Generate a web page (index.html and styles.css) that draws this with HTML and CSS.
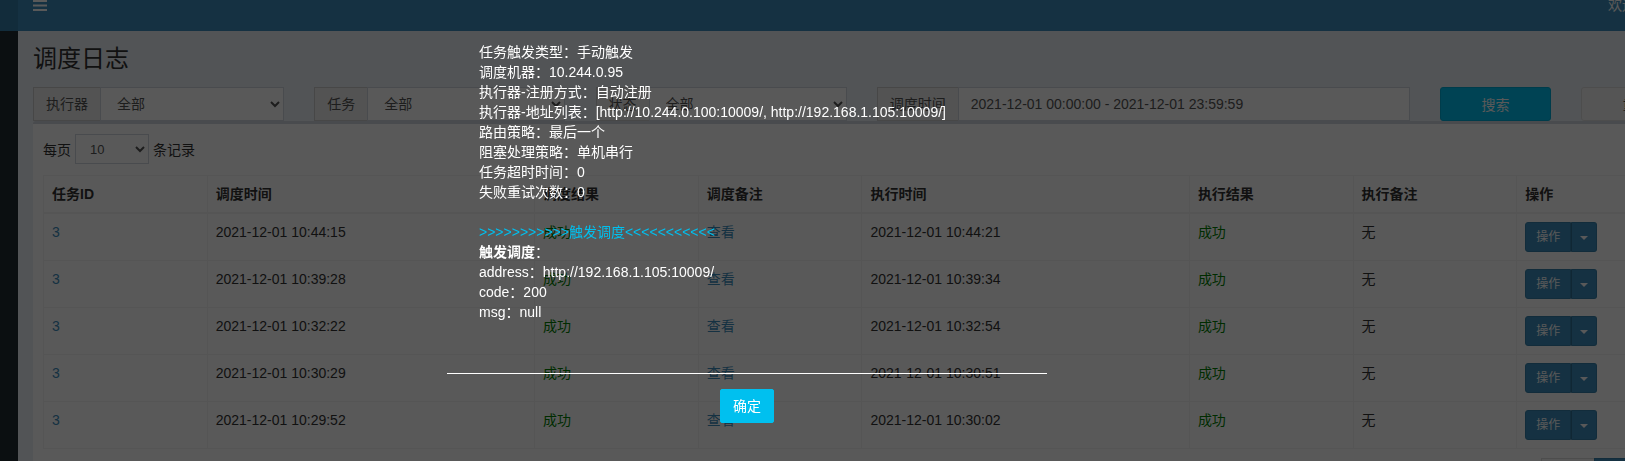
FILE: index.html
```html
<!DOCTYPE html>
<html lang="zh-CN">
<head>
    <meta charset="UTF-8">
    <title>调度日志</title>
    <link rel="stylesheet" href="styles.css">
</head>
<body>
    <div class="wrapper">
        <header class="main-header">
            <div class="logo"></div>
            <nav class="navbar">
                <a href="#" class="sidebar-toggle">
                    <svg width="14" height="12" viewBox="0 0 14 12">
                        <rect x="0" y="0" width="14" height="2" fill="#fff"/>
                        <rect x="0" y="4.5" width="14" height="2" fill="#fff"/>
                        <rect x="0" y="9" width="14" height="2" fill="#fff"/>
                    </svg>
                </a>
                <div class="navbar-right">欢迎 admin</div>
            </nav>
        </header>

        <div class="page">
            <aside class="main-sidebar"></aside>
            <div class="content-wrapper">
                <section class="content-header">
                    <h1>调度日志</h1>
                </section>

                <section class="content">
                    <div class="filter-row">
                        <div class="input-group">
                            <span class="input-group-addon">执行器</span>
                            <select class="form-control"><option>全部</option></select>
                        </div>
                        <div class="input-group">
                            <span class="input-group-addon">任务</span>
                            <select class="form-control"><option>全部</option></select>
                        </div>
                        <div class="input-group">
                            <span class="input-group-addon">状态</span>
                            <select class="form-control"><option>全部</option></select>
                        </div>
                        <div class="input-group">
                            <span class="input-group-addon">调度时间</span>
                            <input type="text" class="form-control" value="2021-12-01 00:00:00 - 2021-12-01 23:59:59">
                        </div>
                        <button class="btn btn-info">搜索</button>
                        <button class="btn btn-default">重置</button>
                    </div>

                    <div class="box">
                        <div class="box-body">
                            <div class="length">
                                <span>每页</span>
                                <select class="input-sm"><option>10</option></select>
                                <span>条记录</span>
                            </div>

                            <table class="log-table">
                                <colgroup>
                                    <col class="c1"><col class="c2"><col class="c1"><col class="c1">
                                    <col class="c2"><col class="c1"><col class="c1"><col class="c1">
                                </colgroup>
                                <thead>
                                    <tr>
                                        <th>任务ID</th>
                                        <th>调度时间</th>
                                        <th>调度结果</th>
                                        <th>调度备注</th>
                                        <th>执行时间</th>
                                        <th>执行结果</th>
                                        <th>执行备注</th>
                                        <th>操作</th>
                                    </tr>
                                </thead>
                                <tbody>
                                    <tr>
                                        <td><a href="#">3</a></td>
                                        <td>2021-12-01 10:44:15</td>
                                        <td><span class="ok">成功</span></td>
                                        <td><a href="#">查看</a></td>
                                        <td>2021-12-01 10:44:21</td>
                                        <td><span class="ok">成功</span></td>
                                        <td>无</td>
                                        <td><div class="btn-group"><button class="btn-op">操作</button><button class="btn-op caret-btn"><span class="caret"></span></button></div></td>
                                    </tr>
                                    <tr>
                                        <td><a href="#">3</a></td>
                                        <td>2021-12-01 10:39:28</td>
                                        <td><span class="ok">成功</span></td>
                                        <td><a href="#">查看</a></td>
                                        <td>2021-12-01 10:39:34</td>
                                        <td><span class="ok">成功</span></td>
                                        <td>无</td>
                                        <td><div class="btn-group"><button class="btn-op">操作</button><button class="btn-op caret-btn"><span class="caret"></span></button></div></td>
                                    </tr>
                                    <tr>
                                        <td><a href="#">3</a></td>
                                        <td>2021-12-01 10:32:22</td>
                                        <td><span class="ok">成功</span></td>
                                        <td><a href="#">查看</a></td>
                                        <td>2021-12-01 10:32:54</td>
                                        <td><span class="ok">成功</span></td>
                                        <td>无</td>
                                        <td><div class="btn-group"><button class="btn-op">操作</button><button class="btn-op caret-btn"><span class="caret"></span></button></div></td>
                                    </tr>
                                    <tr>
                                        <td><a href="#">3</a></td>
                                        <td>2021-12-01 10:30:29</td>
                                        <td><span class="ok">成功</span></td>
                                        <td><a href="#">查看</a></td>
                                        <td>2021-12-01 10:30:51</td>
                                        <td><span class="ok">成功</span></td>
                                        <td>无</td>
                                        <td><div class="btn-group"><button class="btn-op">操作</button><button class="btn-op caret-btn"><span class="caret"></span></button></div></td>
                                    </tr>
                                    <tr>
                                        <td><a href="#">3</a></td>
                                        <td>2021-12-01 10:29:52</td>
                                        <td><span class="ok">成功</span></td>
                                        <td><a href="#">查看</a></td>
                                        <td>2021-12-01 10:30:02</td>
                                        <td><span class="ok">成功</span></td>
                                        <td>无</td>
                                        <td><div class="btn-group"><button class="btn-op">操作</button><button class="btn-op caret-btn"><span class="caret"></span></button></div></td>
                                    </tr>
                                </tbody>
                            </table>

                            <ul class="pagination">
                                <li><a href="#">上页</a></li>
                                <li class="active"><a href="#">1</a></li>
                                <li><a href="#">下页</a></li>
                            </ul>
                        </div>
                    </div>
                </section>
            </div>
        </div>
    </div>

    <div class="layer-shade"></div>
    <div class="layer">
        <div class="layer-content">
            任务触发类型：手动触发<br>
            调度机器：10.244.0.95<br>
            执行器-注册方式：自动注册<br>
            执行器-地址列表：[http://10.244.0.100:10009/, http://192.168.1.105:10009/]<br>
            路由策略：最后一个<br>
            阻塞处理策略：单机串行<br>
            任务超时时间：0<br>
            失败重试次数：0<br>
            <br>
            <span class="trigger-title">&gt;&gt;&gt;&gt;&gt;&gt;&gt;&gt;&gt;&gt;&gt;触发调度&lt;&lt;&lt;&lt;&lt;&lt;&lt;&lt;&lt;&lt;&lt;</span><br>
            <b>触发调度</b>：<br>
            address：http://192.168.1.105:10009/<br>
            code：200<br>
            msg：null
        </div>
        <div class="layer-btn">
            <a href="#">确定</a>
        </div>
    </div>
</body>
</html>
```

FILE: styles.css
```css
body {
    margin: 0;
    font-family: "Liberation Sans", "Noto Sans CJK SC", sans-serif;
    font-size: 14px;
    color: #333;
    background: #222d32;
    overflow: hidden;
}
a {
    color: #3c8dbc;
    text-decoration: none;
}
.wrapper {
    width: 1706px;
}
.main-header {
    display: flex;
    height: 31px;
}
.logo {
    width: 18px;
    background: #367fa9;
}
.navbar {
    flex: 1;
    display: flex;
    align-items: flex-start;
    padding: 0 28px 0 15px;
    background: #3c8dbc;
    color: #fff;
}
.sidebar-toggle {
    display: block;
    height: 12px;
}
.sidebar-toggle svg {
    display: block;
}
.navbar-right {
    margin-left: auto;
    margin-top: -3px;
    line-height: 16px;
}
.page {
    display: flex;
    height: 440px;
}
.main-sidebar {
    width: 18px;
    background: #222d32;
}
.content-wrapper {
    width: 1688px;
    padding: 0 15px;
    box-sizing: border-box;
    background: #ecf0f5;
}
.content-header {
    padding-top: 14px;
}
.content-header h1 {
    margin: 0;
    font-size: 24px;
    line-height: 28px;
    font-weight: normal;
}
.content {
    padding-top: 14px;
}
.filter-row {
    display: grid;
    grid-template-columns: 251px 251px 251px 533px 111px 111px;
    column-gap: 30.25px;
}
.input-group {
    display: flex;
    height: 34px;
}
.input-group-addon {
    padding: 6px 12px;
    line-height: 20px;
    background: #eee;
    border: 1px solid #ccc;
    border-right: 0;
    color: #555;
    white-space: nowrap;
}
.form-control {
    flex: 1;
    min-width: 0;
    height: 34px;
    box-sizing: border-box;
    padding: 6px 12px;
    border: 1px solid #d2d6de;
    border-radius: 0;
    background: #fff;
    color: #555;
    font-family: inherit;
    font-size: 14px;
}
.btn {
    height: 34px;
    border-radius: 3px;
    font-family: inherit;
    font-size: 14px;
    border: 1px solid transparent;
}
.btn-info {
    background: #00c0ef;
    border-color: #00acd6;
    color: #fff;
}
.btn-default {
    background: #f4f4f4;
    border-color: #ddd;
    color: #444;
}
.box {
    background: #fff;
    border-top: 3px solid #d2d6de;
    border-radius: 3px;
}
.box-body {
    padding: 10px;
}
.length {
    display: flex;
    align-items: center;
    gap: 4px;
    height: 30px;
    margin-bottom: 11px;
}
.input-sm {
    width: 74px;
    height: 30px;
    padding: 5px 10px;
    border: 1px solid #d2d6de;
    border-radius: 0;
    background: #fff;
    color: #555;
    font-family: inherit;
    font-size: 13px;
}
.log-table {
    width: 100%;
    table-layout: fixed;
    border-collapse: collapse;
    border: 1px solid #f4f4f4;
}
.log-table .c1 {
    width: 10%;
}
.log-table .c2 {
    width: 20%;
}
.log-table th,
.log-table td {
    padding: 8px;
    line-height: 20px;
    text-align: left;
    vertical-align: top;
    border: 1px solid #f4f4f4;
    white-space: nowrap;
}
.log-table th {
    border-bottom-width: 2px;
}
.ok {
    color: green;
}
.btn-group {
    display: flex;
}
.btn-op {
    height: 30px;
    padding: 5px 10px;
    font-family: inherit;
    font-size: 12px;
    line-height: 18px;
    background: #3c8dbc;
    border: 1px solid #367fa9;
    color: #fff;
    border-radius: 3px 0 0 3px;
}
.caret-btn {
    padding: 5px 8px;
    border-left-color: #2f6f96;
    border-radius: 0 3px 3px 0;
}
.caret {
    display: inline-block;
    border-top: 4px solid #fff;
    border-left: 4px solid transparent;
    border-right: 4px solid transparent;
    vertical-align: middle;
}
.pagination {
    display: flex;
    justify-content: flex-end;
    margin: 9px 0 0;
    padding: 0;
    list-style: none;
}
.pagination a {
    display: block;
    padding: 6px 12px;
    line-height: 20px;
    border: 1px solid #ddd;
    margin-left: -1px;
    background: #fafafa;
    color: #666;
}
.pagination .active a {
    background: #3c8dbc;
    border-color: #367fa9;
    color: #fff;
}
.layer-shade {
    position: fixed;
    top: 0;
    left: 0;
    right: 0;
    bottom: 0;
    background: rgba(0, 0, 0, 0.65);
}
.layer {
    position: absolute;
    top: 22px;
    left: 447px;
    width: 600px;
    color: #fff;
}
.layer-content {
    height: 352px;
    box-sizing: border-box;
    padding: 20px 32px 0;
    line-height: 20px;
    border-bottom: 1px solid #fff;
    white-space: nowrap;
}
.trigger-title {
    color: #00c0ef;
}
.layer-btn {
    padding-top: 15px;
    text-align: center;
}
.layer-btn a {
    display: inline-block;
    height: 34px;
    line-height: 32px;
    padding: 0 12px;
    background: #00c0ef;
    border: 1px solid #00c0ef;
    border-radius: 2px;
    color: #fff;
    box-sizing: border-box;
}
```
